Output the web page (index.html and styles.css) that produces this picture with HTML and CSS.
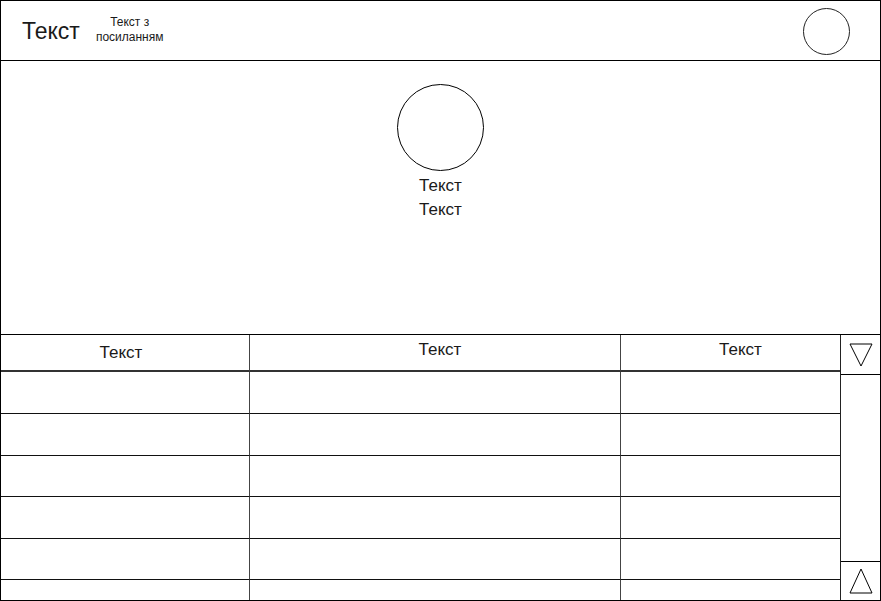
FILE: index.html
```html
<!DOCTYPE html>
<html lang="uk">
<head>
<meta charset="utf-8">
<title>Макет</title>
<link rel="stylesheet" href="styles.css">
</head>
<body>
<div class="frame">
  <header class="header">
    <div class="title">Текст</div>
    <a class="link" href="#">Текст з<br>посиланням</a>
    <div class="avatar-small"></div>
  </header>
  <section class="hero">
    <div class="avatar-big"></div>
    <div class="hero-text">Текст<br>Текст</div>
  </section>
  <section class="table-area">
    <div class="table">
      <div class="th c1">Текст</div>
      <div class="th c2">Текст</div>
      <div class="th c3">Текст</div>
      <div class="td"></div><div class="td"></div><div class="td last"></div>
      <div class="td"></div><div class="td"></div><div class="td last"></div>
      <div class="td"></div><div class="td"></div><div class="td last"></div>
      <div class="td"></div><div class="td"></div><div class="td last"></div>
      <div class="td"></div><div class="td"></div><div class="td last"></div>
      <div class="td end"></div><div class="td end"></div><div class="td end last"></div>
    </div>
    <div class="scrollbar">
      <div class="sbtn top">
        <svg width="24" height="24" viewBox="0 0 24 24"><polygon points="1,1 23,1 12,23" fill="none" stroke="#000" stroke-width="1"/></svg>
      </div>
      <div class="track"></div>
      <div class="sbtn bottom">
        <svg width="24" height="26" viewBox="0 0 24 26"><polygon points="12,1 23,25 1,25" fill="none" stroke="#000" stroke-width="1"/></svg>
      </div>
    </div>
  </section>
</div>
</body>
</html>
```
FILE: styles.css
```css
html, body {
  margin: 0;
  padding: 0;
  background: #fff;
}
body {
  font-family: "Liberation Sans", Arial, sans-serif;
  color: #1a1a1a;
}
.frame {
  box-sizing: border-box;
  width: 881px;
  height: 601px;
  border: 1px solid #000;
  display: flex;
  flex-direction: column;
  overflow: hidden;
}
.header {
  height: 59px;
  border-bottom: 1px solid #000;
  display: flex;
  align-items: center;
  padding: 0 30px 0 21px;
  flex: none;
}
.title {
  font-size: 23px;
  line-height: 26px;
  margin-top: 1px;
}
.link {
  font-size: 12px;
  line-height: 15px;
  text-align: center;
  color: #1a1a1a;
  text-decoration: none;
  margin-left: 16px;
  margin-top: -1px;
}
.avatar-small {
  box-sizing: border-box;
  width: 47px;
  height: 47px;
  border: 1px solid #222;
  border-radius: 50%;
  margin-left: auto;
  margin-top: 1px;
}
.hero {
  height: 273px;
  flex: none;
  display: flex;
  flex-direction: column;
  align-items: center;
  padding-top: 23px;
  box-sizing: border-box;
}
.avatar-big {
  box-sizing: border-box;
  width: 87px;
  height: 87px;
  border: 1px solid #000;
  border-radius: 50%;
}
.hero-text {
  font-size: 17px;
  line-height: 24px;
  text-align: center;
  margin-top: 3px;
}
.table-area {
  flex: 1;
  display: flex;
  border-top: 1px solid #000;
  min-height: 0;
}
.table {
  width: 839px;
  display: grid;
  grid-template-columns: 249px 371px 219px;
  grid-template-rows: 37px 42px 42px 41px 42px 41px 1fr;
}
.th {
  box-sizing: border-box;
  border-bottom: 2px solid #333;
  border-right: 1px solid #444;
  font-size: 17px;
  display: flex;
  align-items: center;
  justify-content: center;
}
.th.c1 { padding-right: 8px; padding-top: 1px; }
.th.c2 { padding-left: 10px; padding-bottom: 5px; }
.th.c3 { padding-left: 20px; padding-bottom: 5px; border-right: none; }
.td {
  box-sizing: border-box;
  border-bottom: 1px solid #111;
  border-right: 1px solid #444;
}
.td.last { border-right: none; }
.td.end { border-bottom: none; }
.scrollbar {
  width: 40px;
  border-left: 1px solid #222;
  display: flex;
  flex-direction: column;
}
.sbtn {
  display: flex;
  align-items: center;
  justify-content: center;
  flex: none;
}
.sbtn.top {
  height: 39px;
  border-bottom: 1px solid #000;
}
.sbtn.bottom {
  height: 38px;
  border-top: 1px solid #000;
  padding-left: 1px;
}
.track {
  flex: 1;
}
```
